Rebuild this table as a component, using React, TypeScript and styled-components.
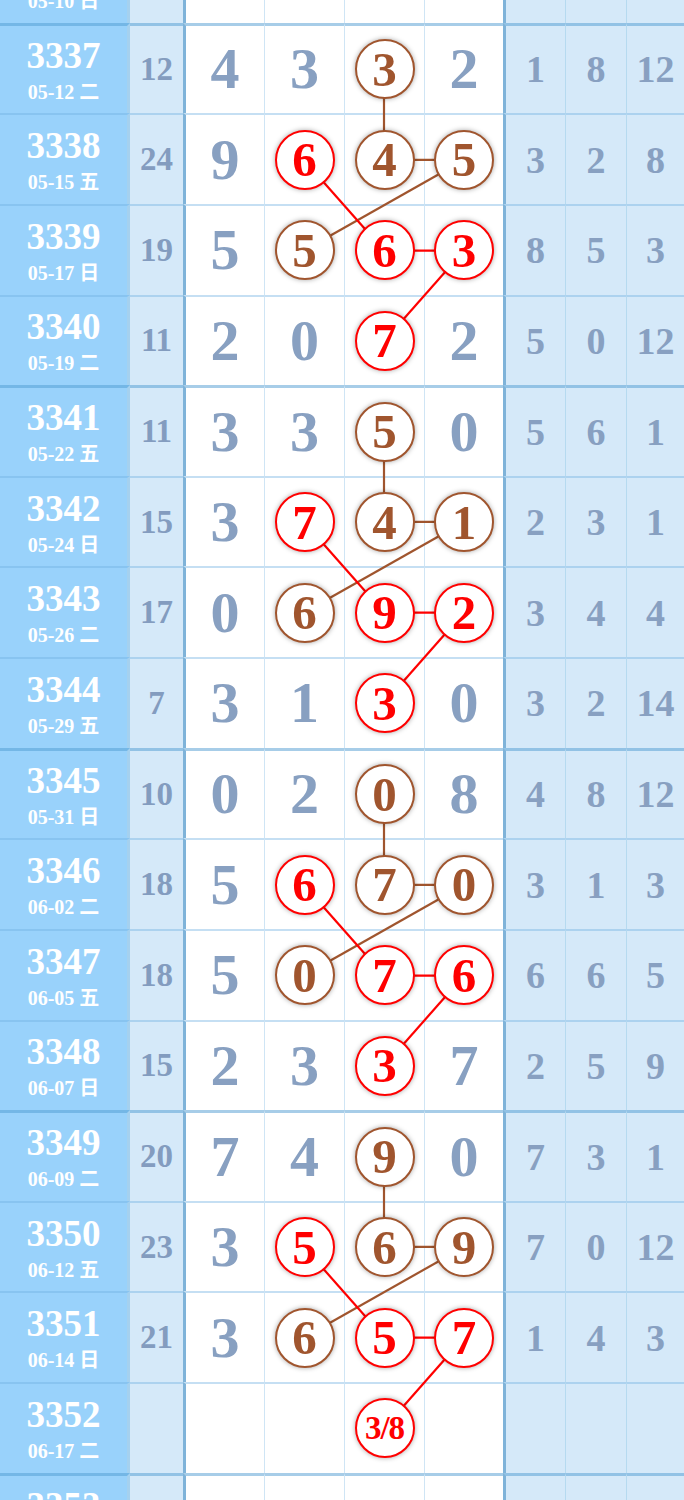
import React from 'react'
import styled, { createGlobalStyle } from 'styled-components'

const GlobalStyle = createGlobalStyle`
  html, body {
    margin: 0;
    padding: 0;
    background: #fff;
  }
  body {
    width: 684px;
    overflow: hidden;
  }
`

const ROW_H = 90.625
const DIGIT_X = [225, 304, 384, 464]
const BROWN = '#a0552e'
const RED = '#ff0000'

type Tone = 'b' | 'r' | ''
type RowData = { no: string; date: string; sum: string; d: string[]; m?: Tone[]; r: string[] }
type Link = { tone: 'b' | 'r'; from: [number, number]; to: [number, number] }
type GroupData = { rows: RowData[]; links: Link[]; lead?: boolean }

// same zigzag in every block of four draws
const A: Tone[] = ['', '', 'b', '']
const B: Tone[] = ['', 'r', 'b', 'b']
const C: Tone[] = ['', 'b', 'r', 'r']
const D: Tone[] = ['', '', 'r', '']

const PATTERN: Link[] = [
    { tone: 'b', from: [0, 2], to: [1, 2] },
    { tone: 'b', from: [1, 2], to: [1, 3] },
    { tone: 'b', from: [1, 3], to: [2, 1] },
    { tone: 'r', from: [1, 1], to: [2, 2] },
    { tone: 'r', from: [2, 2], to: [2, 3] },
    { tone: 'r', from: [2, 3], to: [3, 2] },
]

const groups: GroupData[] = [
    {
        lead: true,
        links: [],
        rows: [{ no: '3336', date: '05-10 日', sum: '16', d: ['1', '9', '2', '4'], r: ['6', '4', '2'] }],
    },
    {
        links: PATTERN,
        rows: [
            { no: '3337', date: '05-12 二', sum: '12', d: ['4', '3', '3', '2'], m: A, r: ['1', '8', '12'] },
            { no: '3338', date: '05-15 五', sum: '24', d: ['9', '6', '4', '5'], m: B, r: ['3', '2', '8'] },
            { no: '3339', date: '05-17 日', sum: '19', d: ['5', '5', '6', '3'], m: C, r: ['8', '5', '3'] },
            { no: '3340', date: '05-19 二', sum: '11', d: ['2', '0', '7', '2'], m: D, r: ['5', '0', '12'] },
        ],
    },
    {
        links: PATTERN,
        rows: [
            { no: '3341', date: '05-22 五', sum: '11', d: ['3', '3', '5', '0'], m: A, r: ['5', '6', '1'] },
            { no: '3342', date: '05-24 日', sum: '15', d: ['3', '7', '4', '1'], m: B, r: ['2', '3', '1'] },
            { no: '3343', date: '05-26 二', sum: '17', d: ['0', '6', '9', '2'], m: C, r: ['3', '4', '4'] },
            { no: '3344', date: '05-29 五', sum: '7', d: ['3', '1', '3', '0'], m: D, r: ['3', '2', '14'] },
        ],
    },
    {
        links: PATTERN,
        rows: [
            { no: '3345', date: '05-31 日', sum: '10', d: ['0', '2', '0', '8'], m: A, r: ['4', '8', '12'] },
            { no: '3346', date: '06-02 二', sum: '18', d: ['5', '6', '7', '0'], m: B, r: ['3', '1', '3'] },
            { no: '3347', date: '06-05 五', sum: '18', d: ['5', '0', '7', '6'], m: C, r: ['6', '6', '5'] },
            { no: '3348', date: '06-07 日', sum: '15', d: ['2', '3', '3', '7'], m: D, r: ['2', '5', '9'] },
        ],
    },
    {
        links: PATTERN,
        rows: [
            { no: '3349', date: '06-09 二', sum: '20', d: ['7', '4', '9', '0'], m: A, r: ['7', '3', '1'] },
            { no: '3350', date: '06-12 五', sum: '23', d: ['3', '5', '6', '9'], m: B, r: ['7', '0', '12'] },
            { no: '3351', date: '06-14 日', sum: '21', d: ['3', '6', '5', '7'], m: C, r: ['1', '4', '3'] },
            { no: '3352', date: '06-17 二', sum: '', d: ['', '', '3/8', ''], m: D, r: ['', '', ''] },
        ],
    },
    {
        links: [],
        rows: [{ no: '3353', date: '06-20 五', sum: '', d: ['', '', '', ''], r: ['', '', ''] }],
    },
]

const Chart = styled.div`
    width: 684px;
    margin-top: -68px;
    font-family: "Liberation Serif", "Noto Sans CJK SC", serif;
`

const Group = styled.section`
    position: relative;
`

const Row = styled.div<{ $edge: 'thin' | 'thick' }>`
    display: grid;
    grid-template-columns: 130px 53px 81px 80px 80px 79px 62px 61px 58px;
    height: ${ROW_H}px;

    & > div {
        border-top: ${p => p.$edge === 'thick'
        ? '3px solid rgba(80, 155, 210, 0.5)'
        : '2px solid rgba(110, 175, 225, 0.4)'};
    }
`

const Cell = styled.div`
    display: flex;
    align-items: center;
    justify-content: center;
    box-sizing: border-box;
    font-weight: 700;
    line-height: 1;
`

const IssueCell = styled(Cell)`
    flex-direction: column;
    gap: 8px;
    background: #99d2fb;
    color: #fff;
    border-right: 3px solid #a5d1ef;
`

const IssueNo = styled.span`
    font-size: 37px;
    font-weight: 700;
`

const IssueDate = styled.span`
    font-size: 20px;
    font-weight: 700;
`

const SumCell = styled(Cell)`
    background: #d5e9f9;
    color: #839cbf;
    font-size: 33px;
`

const DigitCell = styled(Cell)<{ $first?: boolean }>`
    background: #fff;
    color: #88a0c1;
    font-size: 58px;
    border-left: ${p => p.$first ? '3px solid #7fb3d9' : '1px solid #cfe5f5'};
`

const RightCell = styled(Cell)<{ $first?: boolean }>`
    background: #d5e9f9;
    color: #88a0c1;
    font-size: 38px;
    border-left: ${p => p.$first ? '3px solid #7fb3d9' : '1px solid #b6daf0'};
`

const Ball = styled.div<{ $tone: 'b' | 'r'; $small?: boolean }>`
    position: relative;
    z-index: 2;
    width: 60px;
    height: 60px;
    box-sizing: border-box;
    border-radius: 50%;
    border: 2.8px solid ${p => p.$tone === 'r' ? RED : BROWN};
    background: #fff;
    color: ${p => p.$tone === 'r' ? RED : BROWN};
    font-size: ${p => p.$small ? '33px' : '49px'};
    letter-spacing: ${p => p.$small ? '-1px' : '0'};
    display: flex;
    align-items: center;
    justify-content: center;
    box-shadow: 0 0 5px rgba(0, 0, 0, 0.35);
`

const Links = styled.svg`
    position: absolute;
    left: 0;
    top: 0;
    width: 684px;
    height: 100%;
    z-index: 1;
    pointer-events: none;
`

function centerY(row: number) {
    return row * ROW_H + (ROW_H + (row === 0 ? 3 : 2)) / 2
}

function DrawRow({ row, edge }: { row: RowData, edge: 'thin' | 'thick' }) {
    return <Row $edge={edge}>
        <IssueCell>
            <IssueNo>{row.no}</IssueNo>
            <IssueDate>{row.date}</IssueDate>
        </IssueCell>
        <SumCell>{row.sum}</SumCell>
        {row.d.map((v, i) => {
            const tone = row.m?.[i]
            return <DigitCell key={i} $first={i === 0}>
                {tone ? <Ball $tone={tone} $small={v.length > 1}>{v}</Ball> : v}
            </DigitCell>
        })}
        {row.r.map((v, i) => <RightCell key={i} $first={i === 0}>{v}</RightCell>)}
    </Row>
}

export default function App() {
    return <Chart>
        <GlobalStyle />
        {groups.map((g, gi) => <Group key={gi}>
            {g.rows.map((row, ri) =>
                <DrawRow key={row.no} row={row} edge={ri === 0 && !g.lead ? 'thick' : 'thin'} />
            )}
            {g.links.length > 0 &&
                <Links viewBox={`0 0 684 ${ROW_H * g.rows.length}`} preserveAspectRatio="none">
                    {g.links.map((l, li) => <line key={li}
                        x1={DIGIT_X[l.from[1]]} y1={centerY(l.from[0])}
                        x2={DIGIT_X[l.to[1]]} y2={centerY(l.to[0])}
                        stroke={l.tone === 'r' ? RED : BROWN} strokeWidth={2.2} />)}
                </Links>
            }
        </Group>)}
    </Chart>
}
